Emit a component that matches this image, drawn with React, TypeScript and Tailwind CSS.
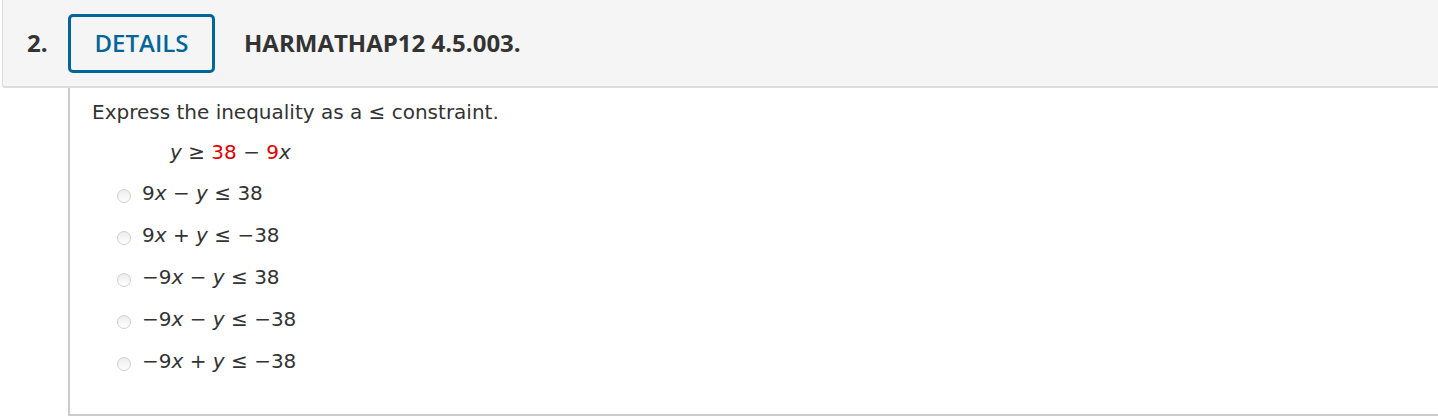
import React from 'react';

const options: React.ReactNode[] = [
  <>9<i>x</i> − <i>y</i> ≤ 38</>,
  <>9<i>x</i> + <i>y</i> ≤ −38</>,
  <>−9<i>x</i> − <i>y</i> ≤ 38</>,
  <>−9<i>x</i> − <i>y</i> ≤ −38</>,
  <>−9<i>x</i> + <i>y</i> ≤ −38</>,
];

export default function App() {
  return (
    <div className="w-[1438px] h-[418px] bg-white overflow-hidden">
      {/* question header */}
      <div className="ml-[2px] h-[88px] flex items-center bg-[#f5f5f5] border-l border-b-2 border-[#dddddd] rounded-bl-[3px] font-[family-name:'Open_Sans',sans-serif]">
        <span className="ml-[24px] w-[41px] text-[24px] font-bold text-[#333]">2.</span>
        <button className="w-[147px] h-[59px] border-[3px] border-[#006599] rounded-[5px] text-[24px] font-semibold text-[#006599] bg-transparent">
          DETAILS
        </button>
        <span className="ml-[29px] text-[24px] font-bold text-[#333]">HARMATHAP12 4.5.003.</span>
      </div>

      {/* question body */}
      <div className="ml-[68px] h-[328px] border-l-2 border-b-2 border-[#cccccc] pl-[22px] pt-[10px] text-[20px] text-[#333] font-[family-name:'DejaVu_Sans',sans-serif]">
        <p className="leading-[28px]">Express the inequality as a ≤ constraint.</p>
        <p className="mt-[12px] ml-[78px] leading-[28px]">
          <i>y</i> ≥ <span className="text-[#e00000]">38</span> − <span className="text-[#e00000]">9</span><i>x</i>
        </p>
        <div className="mt-[13px] flex flex-col gap-[14px] ml-[25px]">
          {options.map((o, i) => (
            <label key={i} className="flex items-center h-[28px]">
              <span className="w-[14px] h-[14px] rounded-full border border-[#cfcfcf] bg-gradient-to-b from-[#ededed] to-white mr-[11px] mt-[6px]" />
              <span>{o}</span>
            </label>
          ))}
        </div>
      </div>
    </div>
  );
}
